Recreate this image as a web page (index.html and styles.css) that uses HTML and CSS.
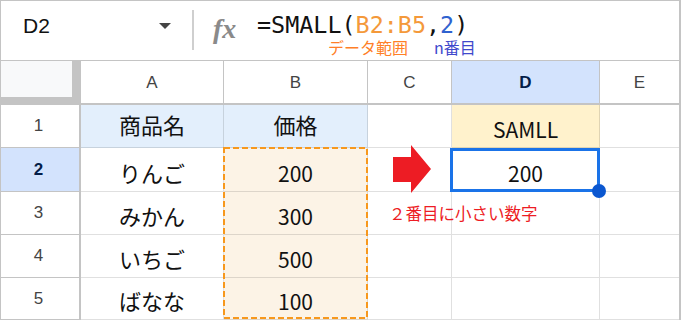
FILE: index.html
```html
<!DOCTYPE html>
<html lang="ja">
<head>
<meta charset="utf-8">
<link rel="stylesheet" href="styles.css">
</head>
<body>
<div class="sheet">
  <div class="fbar">
    <div class="namebox"><span class="ref">D2</span><span class="caret"></span></div>
    <div class="sep"></div>
    <div class="fx">fx</div>
    <div class="formula">
      <div class="ftext">=SMALL(<span class="rng">B2:B5</span>,<span class="nth">2</span>)</div>
      <div class="notes"><span class="n1">データ範囲</span><span class="n2">n番目</span></div>
    </div>
  </div>
  <div class="grid">
    <div class="corner"></div>
    <div class="ch">A</div>
    <div class="ch">B</div>
    <div class="ch">C</div>
    <div class="ch sel">D</div>
    <div class="ch last">E</div>

    <div class="rh">1</div>
    <div class="c hd jp">商品名</div>
    <div class="c hd jp">価格</div>
    <div class="c"></div>
    <div class="c yel num">SAMLL</div>
    <div class="c last"></div>

    <div class="rh sel">2</div>
    <div class="c jp">りんご</div>
    <div class="c rng-cell num">200</div>
    <div class="c"></div>
    <div class="c num">200</div>
    <div class="c last"></div>

    <div class="rh">3</div>
    <div class="c jp">みかん</div>
    <div class="c rng-cell num">300</div>
    <div class="c note-cell"><span class="note">２番目に小さい数字</span></div>
    <div class="c"></div>
    <div class="c last"></div>

    <div class="rh">4</div>
    <div class="c jp">いちご</div>
    <div class="c rng-cell num">500</div>
    <div class="c"></div>
    <div class="c"></div>
    <div class="c last"></div>

    <div class="rh">5</div>
    <div class="c jp">ばなな</div>
    <div class="c rng-cell num">100</div>
    <div class="c"></div>
    <div class="c"></div>
    <div class="c last"></div>

    <svg class="dash" width="145" height="172" viewBox="0 0 145 172"><rect x="1" y="1" width="143" height="170" fill="none" stroke="#f7981d" stroke-width="2" stroke-dasharray="6 3"/></svg>
    <div class="selbox"></div>
    <div class="handle"></div>
    <svg class="arrow" width="42" height="52" viewBox="0 0 42 52"><polygon points="1,13 19,13 19,1 39,25 19,49 19,38 1,38" fill="#ed1c24"/></svg>
  </div>
</div>
</body>
</html>
```

FILE: styles.css
```css
* { box-sizing: border-box; margin: 0; padding: 0; }
body { margin: 0; background: #fff; font-family: "Liberation Sans", Arial, sans-serif; }

.sheet {
  width: 681px;
  border-top: 1px solid #c4c4c4;
  border-left: 1px solid #c4c4c4;
  border-right: 2px solid #c4c4c4;
}

.fbar {
  display: flex;
  align-items: flex-start;
  height: 60px;
  border-bottom: 1px solid #c4c4c4;
}

.namebox {
  width: 191px;
  display: flex;
  align-items: center;
  margin-top: 14px;
  padding-left: 22px;
  padding-right: 21px;
  height: 21px;
}
.ref { font-size: 21px; line-height: 21px; color: #111; }
.caret {
  margin-left: auto;
  width: 0; height: 0;
  border-left: 6.5px solid transparent;
  border-right: 6.5px solid transparent;
  border-top: 6px solid #444;
}

.sep { width: 2px; height: 40px; margin-top: 9px; background: #cfcfcf; }

.fx {
  margin-left: 19px;
  margin-top: 14px;
  font-family: "Liberation Serif", serif;
  font-style: italic;
  font-weight: bold;
  font-size: 28px;
  line-height: 27px;
  color: #8a8a8a;
  width: 44px;
}

.formula { display: flex; flex-direction: column; }
.ftext {
  margin-top: 12px;
  font-family: "DejaVu Sans Mono", monospace;
  font-size: 23.4px;
  line-height: 24px;
  color: #111;
  white-space: nowrap;
}
.rng { color: #f4993a; }
.nth { color: #2f62cf; }

.notes {
  margin-top: 1px;
  padding-left: 71px;
  display: flex;
  gap: 26px;
  font-family: "Noto Sans CJK JP", sans-serif;
  font-size: 16px;
  line-height: 18px;
  white-space: nowrap;
}
.n1 { color: #ff7f27; }
.n2 { color: #3f48cc; }

.grid {
  position: relative;
  display: grid;
  grid-template-columns: 80px 143px 144px 84px 148px 79px;
  grid-template-rows: 44px 43px 44px 43px 43px 42px;
}

.corner {
  background: #f8f9fa;
  border-right: 9px solid #c4c4c4;
  border-bottom: 8px solid #c4c4c4;
}

.ch {
  display: flex;
  align-items: center;
  justify-content: center;
  border-right: 1px solid #c4c4c4;
  border-bottom: 2px solid #c4c4c4;
  font-size: 17px;
  color: #444;
  padding-top: 1px;
}
.ch.last { border-right: none; }
.ch.sel { background: #d3e3fd; color: #041e49; font-weight: bold; }

.rh {
  display: flex;
  align-items: center;
  justify-content: center;
  border-right: 2px solid #c4c4c4;
  border-bottom: 1px solid #c4c4c4;
  font-size: 17px;
  color: #444;
  padding-right: 3px;
}
.rh.sel { background: #d3e3fd; color: #041e49; font-weight: bold; }

.c {
  display: flex;
  align-items: flex-end;
  justify-content: center;
  border-right: 1px solid rgba(0,0,0,0.12);
  border-bottom: 1px solid rgba(0,0,0,0.12);
  font-family: "Noto Sans CJK JP", sans-serif;
  color: #111;
  line-height: 24px;
  padding-bottom: 6px;
}
.c.last { border-right: none; }
.jp { font-size: 22px; padding-bottom: 7px; }
.num { font-size: 21px; }
.c.hd { background: #e3effc; align-items: center; padding-bottom: 4px; }
.c.yel { background: #fff2cc; }
.c.rng-cell { background: #fcf3e6; }

.note-cell {
  position: relative;
  z-index: 2;
  justify-content: flex-start;
  align-items: center;
  padding: 0 0 0 21px;
  overflow: visible;
}
.note {
  font-size: 16.5px;
  line-height: 20px;
  color: #ed1c24;
  white-space: nowrap;
}

.dash { position: absolute; left: 222px; top: 86px; }
.selbox {
  position: absolute;
  left: 449px; top: 87px;
  width: 150px; height: 44px;
  border: 3px solid #1a73e8;
}
.handle {
  position: absolute;
  left: 591px; top: 123px;
  width: 14px; height: 14px;
  border-radius: 50%;
  background: #0b57d0;
}
.arrow { position: absolute; left: 391px; top: 83px; }
```
